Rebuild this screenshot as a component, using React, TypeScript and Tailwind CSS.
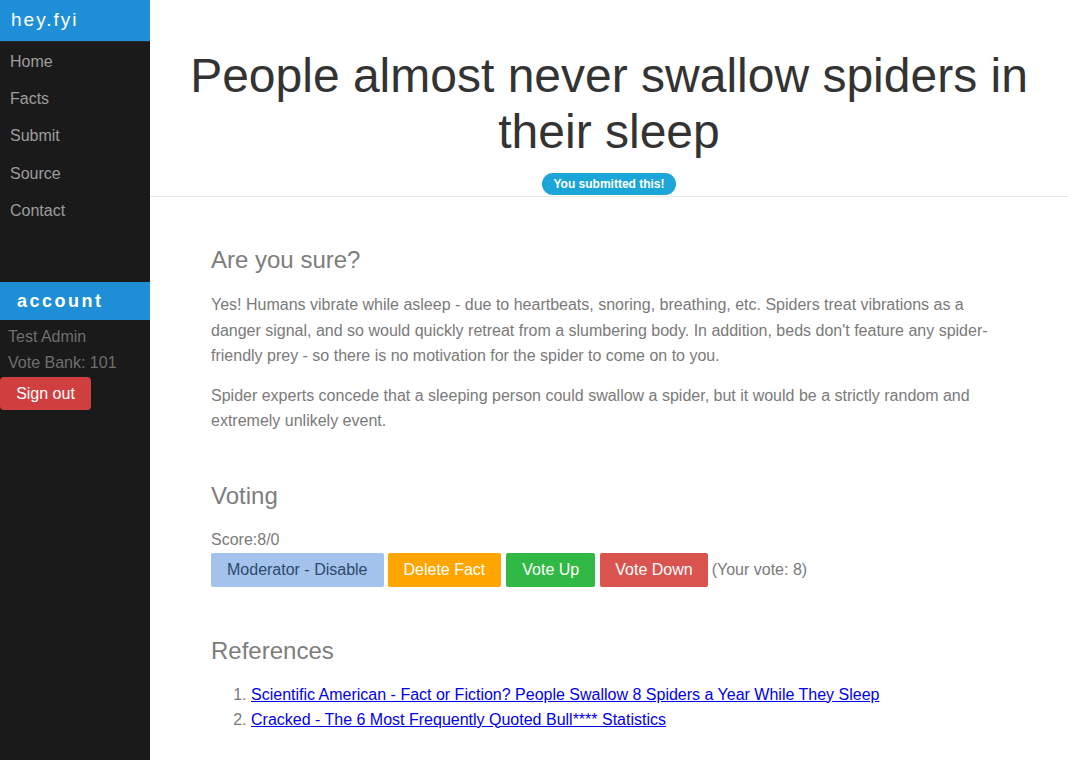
import React from 'react';

const NAV = ['Home', 'Facts', 'Submit', 'Source', 'Contact'];

const REFS = [
  'Scientific American - Fact or Fiction? People Swallow 8 Spiders a Year While They Sleep',
  'Cracked - The 6 Most Frequently Quoted Bull**** Statistics',
];

export default function App() {
  return (
    <div className="flex min-h-screen bg-white font-['Liberation_Sans',Arial,sans-serif] text-[16px]">
      {/* sidebar */}
      <aside className="w-[150px] shrink-0 bg-[#1a1a1a]">
        <div className="h-[42px] bg-[#1e8fd6] border-b border-[#2c2c2c] pl-[11px] flex items-center text-white text-[19px] tracking-[2px] font-medium">
          hey.fyi
        </div>
        <nav className="flex flex-col pt-[1px]">
          {NAV.map(n => (
            <a key={n} href="#" className="pl-[10px] h-[37.3px] flex items-center text-[#9d9d9d]">
              {n}
            </a>
          ))}
        </nav>
        <div className="mt-[53px] h-[38px] bg-[#1e8fd6] pl-[17px] flex items-center text-white text-[18px] font-bold tracking-[2.5px]">
          account
        </div>
        <div className="pt-[4px] pl-[8px] text-[#6f6f6f] leading-[26px]">
          <div>Test Admin</div>
          <div>Vote Bank: 101</div>
        </div>
        <button className="mt-[1px] w-[91px] h-[33px] rounded-[4px] bg-[#d03f3f] text-white text-[16px]">
          Sign out
        </button>
      </aside>

      {/* main */}
      <main className="flex-1">
        <header className="border-b border-[#e7e7e7] pt-[48px] pb-[1px] text-center">
          <h1 className="text-[48px] leading-[56px] text-[#333] px-[30px]">
            People almost never swallow spiders in their sleep
          </h1>
          <span className="inline-block mt-[13px] px-[11px] h-[22px] leading-[22px] rounded-full bg-[#1ba5d8] text-white text-[12px] font-bold">
            You submitted this!
          </span>
        </header>

        <div className="pl-[61px] pr-[70px] text-[#7a7a7a]">
          <h3 className="mt-[48px] text-[24px] leading-[30px] text-[#7d7d7d]">Are you sure?</h3>
          <p className="mt-[17px] leading-[25.5px]">
            Yes! Humans vibrate while asleep - due to heartbeats, snoring, breathing, etc. Spiders treat vibrations as a danger signal, and so would quickly retreat from a slumbering body. In addition, beds don't feature any spider-friendly prey - so there is no motivation for the spider to come on to you.
          </p>
          <p className="mt-[14px] leading-[25.5px]">
            Spider experts concede that a sleeping person could swallow a spider, but it would be a strictly random and extremely unlikely event.
          </p>

          <h3 className="mt-[47px] text-[24px] leading-[30px] text-[#7d7d7d]">Voting</h3>
          <div className="mt-[18px] leading-[22px]">Score:8/0</div>
          <div className="mt-[2px] flex items-center gap-[4px]">
            <button className="h-[34px] px-[16px] bg-[#a3c3ed] text-[#2c4a6a] rounded-[2px]">Moderator - Disable</button>
            <button className="h-[34px] px-[16px] bg-[#ffa500] text-white rounded-[2px]">Delete Fact</button>
            <button className="h-[34px] px-[16px] bg-[#30b944] text-white rounded-[2px] ml-[1px]">Vote Up</button>
            <button className="h-[34px] px-[15px] bg-[#d9534f] text-white rounded-[2px] ml-[1px]">Vote Down</button>
            <span>(Your vote: 8)</span>
          </div>

          <h3 className="mt-[49px] text-[24px] leading-[30px] text-[#7d7d7d]">References</h3>
          <ol className="mt-[16px] list-decimal pl-[40px] leading-[25px]">
            {REFS.map(r => (
              <li key={r}>
                <a href="#" className="text-[#0000ee] underline">{r}</a>
              </li>
            ))}
          </ol>
        </div>
      </main>
    </div>
  );
}
